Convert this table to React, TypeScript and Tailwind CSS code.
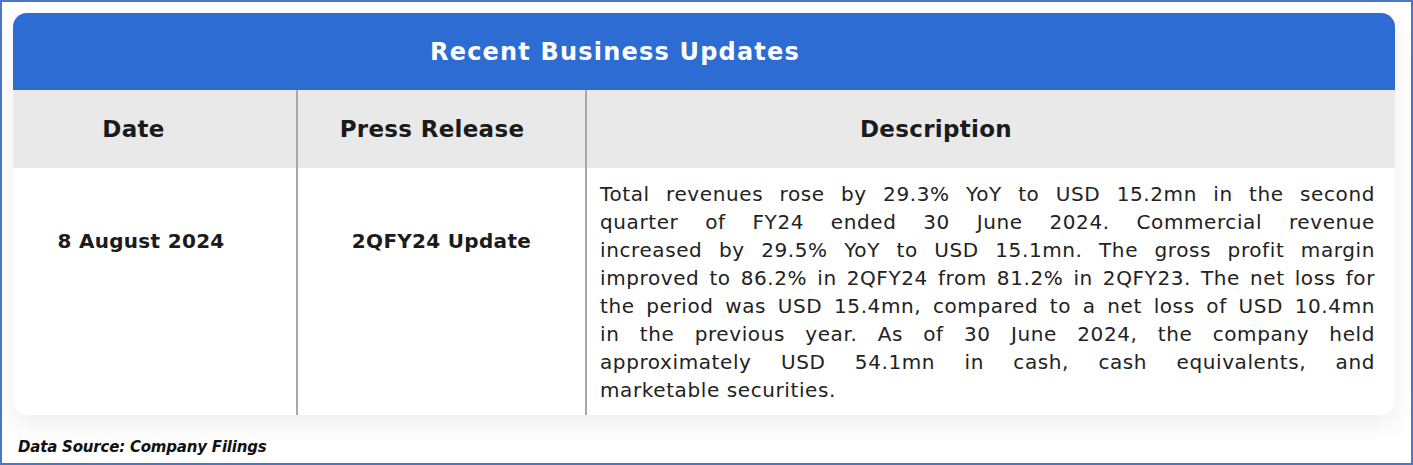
import React from "react";

const font = { fontFamily: "'DejaVu Sans', 'Noto Sans', sans-serif" };

const lines = [
  "Total revenues rose by 29.3% YoY to USD 15.2mn in the second",
  "quarter of FY24 ended 30 June 2024. Commercial revenue",
  "increased by 29.5% YoY to USD 15.1mn. The gross profit margin",
  "improved to 86.2% in 2QFY24 from 81.2% in 2QFY23. The net loss for",
  "the period was USD 15.4mn, compared to a net loss of USD 10.4mn",
  "in the previous year. As of 30 June 2024, the company held",
  "approximately USD 54.1mn in cash, cash equivalents, and",
];

export default function App() {
  return (
    <div className="w-[1413px] h-[465px] bg-white border-2 border-[#4a76c8] flex flex-col" style={font}>
      <div className="pt-[11px] pl-[11px] pr-[16px]">
        <div className="rounded-[14px] overflow-hidden bg-white shadow-[0_10px_24px_rgba(0,0,0,0.07)]">
          <div className="h-[77px] bg-[#2c6cd3] flex items-center justify-center pr-[178px]">
            <span className="text-white font-bold text-[24px] tracking-[1.2px]">Recent Business Updates</span>
          </div>
          <div className="grid grid-cols-[285px_289px_1fr]">
            <div className="h-[78px] bg-[#e9e9e9] flex items-center justify-center pr-[42px] border-r-2 border-[#a8a8a8]">
              <span className="font-bold text-[23px] tracking-[0.3px] text-[#1b1b1b]">Date</span>
            </div>
            <div className="h-[78px] bg-[#e9e9e9] flex items-center justify-center pr-[19px] border-r-2 border-[#a8a8a8]">
              <span className="font-bold text-[23px] tracking-[0.3px] text-[#1b1b1b]">Press Release</span>
            </div>
            <div className="h-[78px] bg-[#e9e9e9] flex items-center justify-center pr-[110px]">
              <span className="font-bold text-[23px] tracking-[0.3px] text-[#1b1b1b]">Description</span>
            </div>
            <div className="h-[247px] flex justify-center pt-[60px] pr-[27px] border-r-2 border-[#a8a8a8]">
              <span className="font-bold text-[20px] tracking-[0.3px] text-[#1b1b1b] leading-[26px]">8 August 2024</span>
            </div>
            <div className="h-[247px] flex justify-center pt-[60px] border-r-2 border-[#a8a8a8]">
              <span className="font-bold text-[20px] tracking-[0.3px] text-[#1b1b1b] leading-[26px]">2QFY24 Update</span>
            </div>
            <div className="h-[247px] flex flex-col justify-center pl-[13px] pr-[20px] text-[20px] tracking-[0.6px] leading-[28px] text-[#222]">
              {lines.map((l) => (
                <div key={l} className="text-justify [text-align-last:justify] whitespace-nowrap">{l}</div>
              ))}
              <div>marketable securities.</div>
            </div>
          </div>
        </div>
      </div>
      <div className="pl-[16px] pt-[20px]">
        <span className="font-bold italic text-[15px] tracking-[-0.2px] text-[#111]">Data Source: Company Filings</span>
      </div>
    </div>
  );
}
